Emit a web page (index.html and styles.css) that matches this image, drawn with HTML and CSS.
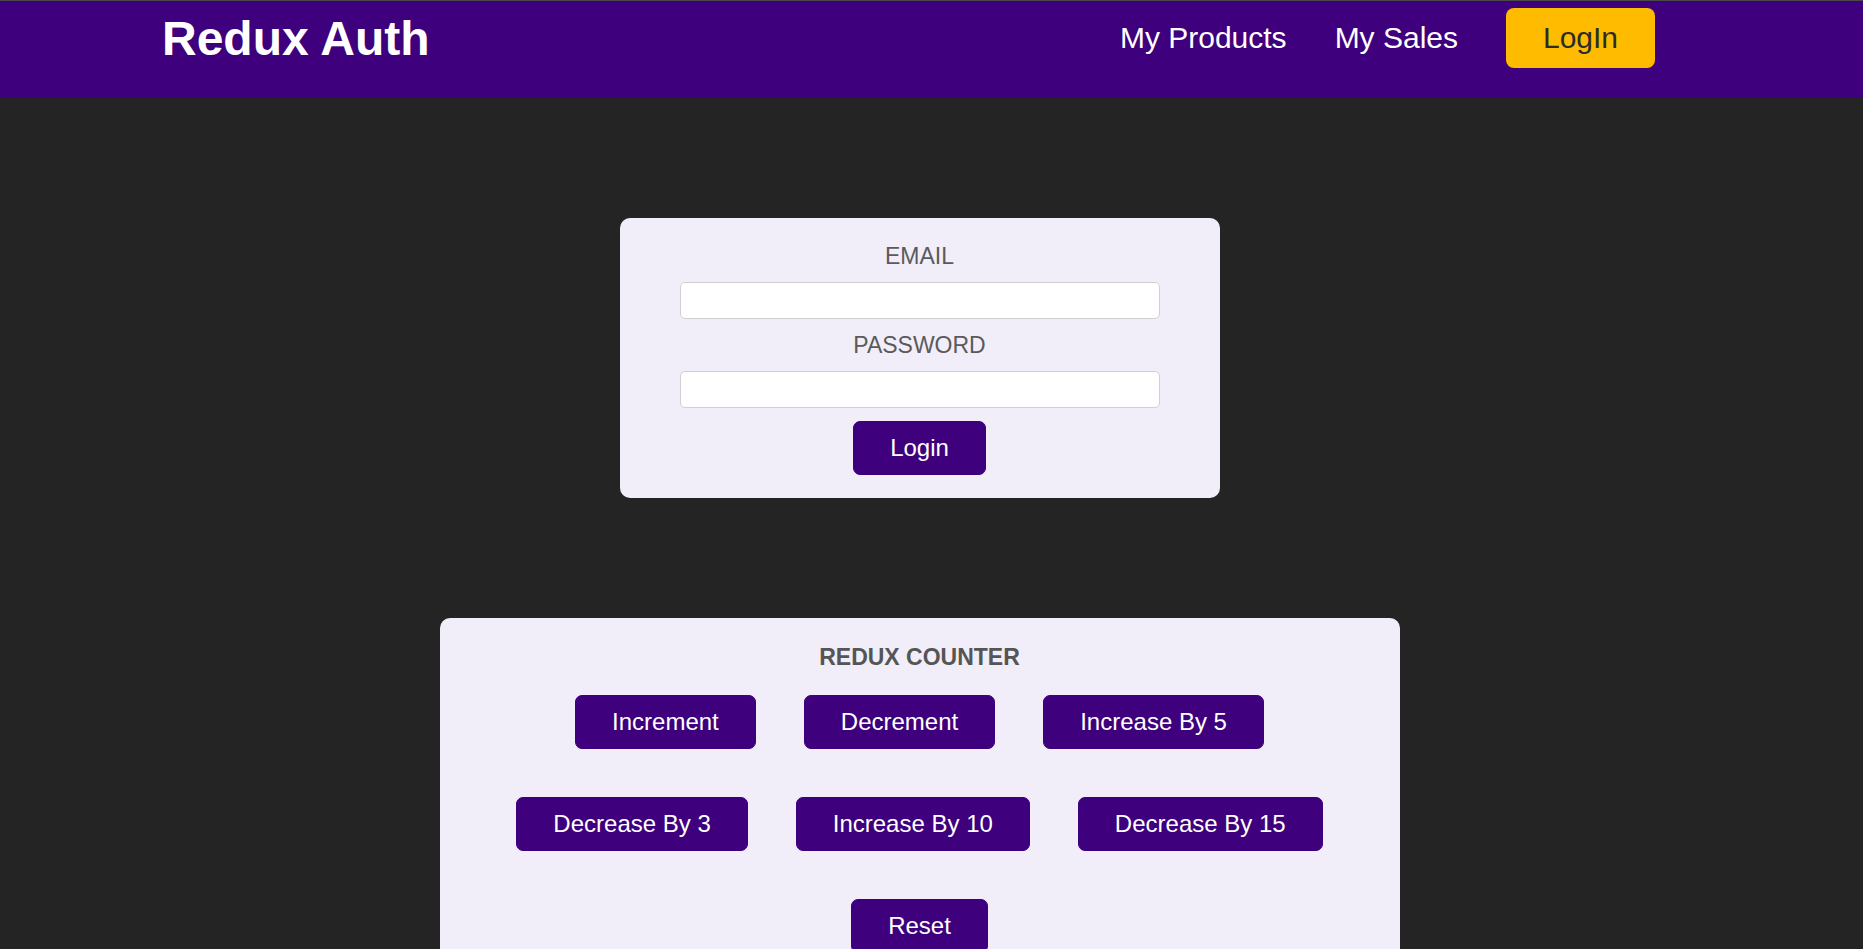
FILE: index.html
```html
<!DOCTYPE html>
<html lang="en">
<head>
<meta charset="utf-8">
<title>Redux Auth</title>
<link rel="stylesheet" href="styles.css">
</head>
<body>
<header class="header">
  <div class="header-row">
    <h1 class="logo">Redux Auth</h1>
    <nav class="nav">
      <a class="nav-link" href="#">My Products</a>
      <a class="nav-link" href="#">My Sales</a>
      <button class="nav-btn">LogIn</button>
    </nav>
  </div>
</header>
<main class="main">
  <section class="card login-card">
    <form class="login-form">
      <label class="field-label" for="email">EMAIL</label>
      <input class="field-input" id="email" type="email">
      <label class="field-label" for="password">PASSWORD</label>
      <input class="field-input" id="password" type="password">
      <button class="btn" type="button">Login</button>
    </form>
  </section>
  <section class="card counter-card">
    <h2 class="counter-title">REDUX COUNTER</h2>
    <div class="btn-row">
      <button class="btn">Increment</button>
      <button class="btn">Decrement</button>
      <button class="btn">Increase By 5</button>
    </div>
    <div class="btn-row">
      <button class="btn">Decrease By 3</button>
      <button class="btn">Increase By 10</button>
      <button class="btn">Decrease By 15</button>
    </div>
    <div class="btn-row">
      <button class="btn">Reset</button>
    </div>
  </section>
</main>
</body>
</html>
```
FILE: styles.css
```css
* { box-sizing: border-box; }

html, body {
  margin: 0;
  padding: 0;
  background: #242424;
  font-family: "Liberation Sans", Arial, sans-serif;
}

.header {
  height: 98px;
  background: #3e007c;
  border-top: 1px solid #4a4a4a;
  padding: 7px 208px 0 162px;
}

.header-row {
  height: 60px;
  display: flex;
  align-items: center;
  justify-content: space-between;
}

.logo {
  margin: 0;
  font-size: 48px;
  font-weight: 700;
  color: #ffffff;
  line-height: normal;
}

.nav {
  display: flex;
  align-items: center;
  gap: 48px;
}

.nav-link {
  color: #ffffff;
  text-decoration: none;
  font-size: 30px;
}

.nav-btn {
  height: 60px;
  width: 149px;
  border: none;
  border-radius: 8px;
  background: #ffbb00;
  color: #2b2b2b;
  font-family: inherit;
  font-size: 30px;
  padding: 0;
}

.main {
  display: flex;
  flex-direction: column;
  align-items: center;
  gap: 120px;
  padding: 120px 24px 0 0;
}

.card {
  background: #f1eef9;
  border-radius: 10px;
}

.login-card {
  width: 600px;
  padding: 25px 0 23px;
}

.login-form {
  display: flex;
  flex-direction: column;
  align-items: center;
}

.field-label {
  font-size: 23px;
  color: #5a5a5a;
  line-height: 26px;
  margin-bottom: 13px;
}

.field-input {
  width: 480px;
  height: 37px;
  border: 1px solid #cfcfd4;
  border-radius: 5px;
  background: #ffffff;
  margin-bottom: 13px;
}

.btn {
  background: #3e007c;
  color: #ffffff;
  border: 1px solid #3e007c;
  border-radius: 7px;
  font-family: inherit;
  font-size: 24px;
  height: 54px;
  padding: 0 36px;
}

.counter-card {
  width: 960px;
  padding: 26px 0 0;
  min-height: 400px;
}

.counter-title {
  margin: 0 0 25px;
  text-align: center;
  font-size: 23px;
  font-weight: 700;
  color: #555555;
  line-height: 26px;
}

.btn-row {
  display: flex;
  justify-content: center;
  gap: 48px;
  margin-bottom: 48px;
}
```
